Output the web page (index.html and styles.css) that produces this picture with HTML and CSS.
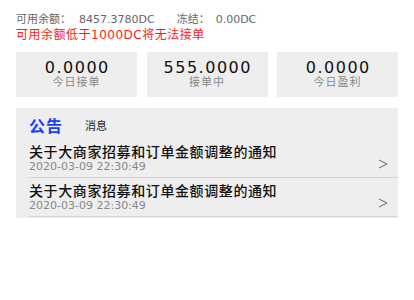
FILE: index.html
```html
<!DOCTYPE html>
<html lang="zh-CN">
<head>
<meta charset="utf-8">
<title>账户</title>
<link rel="stylesheet" href="styles.css">
</head>
<body>
<div class="page">
  <div class="balance">
    <div class="balance-line">
      <span class="b-label">可用余额：</span>
      <span class="b-value">8457.3780DC</span>
      <span class="b-label b-label2">冻结：</span>
      <span class="b-value b-value2">0.00DC</span>
    </div>
    <div class="warn">可用余额低于1000DC将无法接单</div>
  </div>

  <div class="stats">
    <div class="card">
      <div class="num">0.0000</div>
      <div class="lbl">今日接单</div>
    </div>
    <div class="card">
      <div class="num">555.0000</div>
      <div class="lbl">接单中</div>
    </div>
    <div class="card">
      <div class="num">0.0000</div>
      <div class="lbl">今日盈利</div>
    </div>
  </div>

  <div class="notice">
    <div class="tabs">
      <span class="tab active">公告</span>
      <span class="tab">消息</span>
    </div>
    <div class="item">
      <div class="item-text">
        <div class="item-title">关于大商家招募和订单金额调整的通知</div>
        <div class="item-date">2020-03-09 22:30:49</div>
      </div>
      <svg class="chev" width="10" height="10" viewBox="0 0 10 10"><polyline points="1,1 9,5 1,9" fill="none" stroke="#666" stroke-width="1"/></svg>
    </div>
    <div class="item">
      <div class="item-text">
        <div class="item-title">关于大商家招募和订单金额调整的通知</div>
        <div class="item-date">2020-03-09 22:30:49</div>
      </div>
      <svg class="chev" width="10" height="10" viewBox="0 0 10 10"><polyline points="1,1 9,5 1,9" fill="none" stroke="#666" stroke-width="1"/></svg>
    </div>
  </div>
</div>
</body>
</html>
```

FILE: styles.css
```css
html, body {
  margin: 0;
  padding: 0;
  background: #ffffff;
}
body {
  font-family: "DejaVu Sans", "Noto Sans CJK SC", sans-serif;
  color: #222;
}
.page {
  padding: 13px 16px 0;
}
.balance-line {
  display: flex;
  font-size: 11px;
  line-height: 14px;
  color: #666;
}
.b-value {
  margin-left: 8px;
}
.b-label2 {
  margin-left: 22px;
}
.b-value2 {
  margin-left: 6px;
}
.warn {
  margin-top: 1px;
  font-size: 12px;
  line-height: 14px;
  letter-spacing: 0.5px;
  color: #ff1a1a;
}
.stats {
  margin-top: 10px;
  display: grid;
  grid-template-columns: repeat(3, 1fr);
  column-gap: 9.5px;
}
.card {
  height: 45px;
  background: #eeeeee;
  display: flex;
  flex-direction: column;
  align-items: center;
  padding-top: 7px;
  box-sizing: border-box;
}
.num {
  font-size: 16px;
  line-height: 17px;
  letter-spacing: 1.5px;
  color: #111;
  padding-left: 1.5px;
}
.lbl {
  font-size: 11px;
  line-height: 14px;
  letter-spacing: 1px;
  color: #888;
}
.notice {
  margin-top: 11px;
  background: #eeeeee;
  padding-bottom: 1px;
}
.tabs {
  display: flex;
  align-items: center;
  padding: 8px 0 5px 13px;
  height: 18px;
}
.tab {
  font-size: 11px;
  color: #222;
}
.tab.active {
  font-size: 16px;
  font-weight: bold;
  letter-spacing: 1px;
  color: #1a3cff;
  margin-right: 22px;
}
.item {
  display: flex;
  align-items: flex-end;
  margin-left: 13px;
  padding: 5px 10px 4px 0;
  border-bottom: 1px solid #d4d4d4;
}
.item-text {
  flex: 1;
}
.item-title {
  font-size: 14px;
  line-height: 16px;
  letter-spacing: 0.6px;
  font-weight: 500;
  color: #111;
}
.item-date {
  font-size: 11px;
  line-height: 13px;
  color: #888;
}
.chev {
  display: block;
  margin-bottom: 4px;
}
```
